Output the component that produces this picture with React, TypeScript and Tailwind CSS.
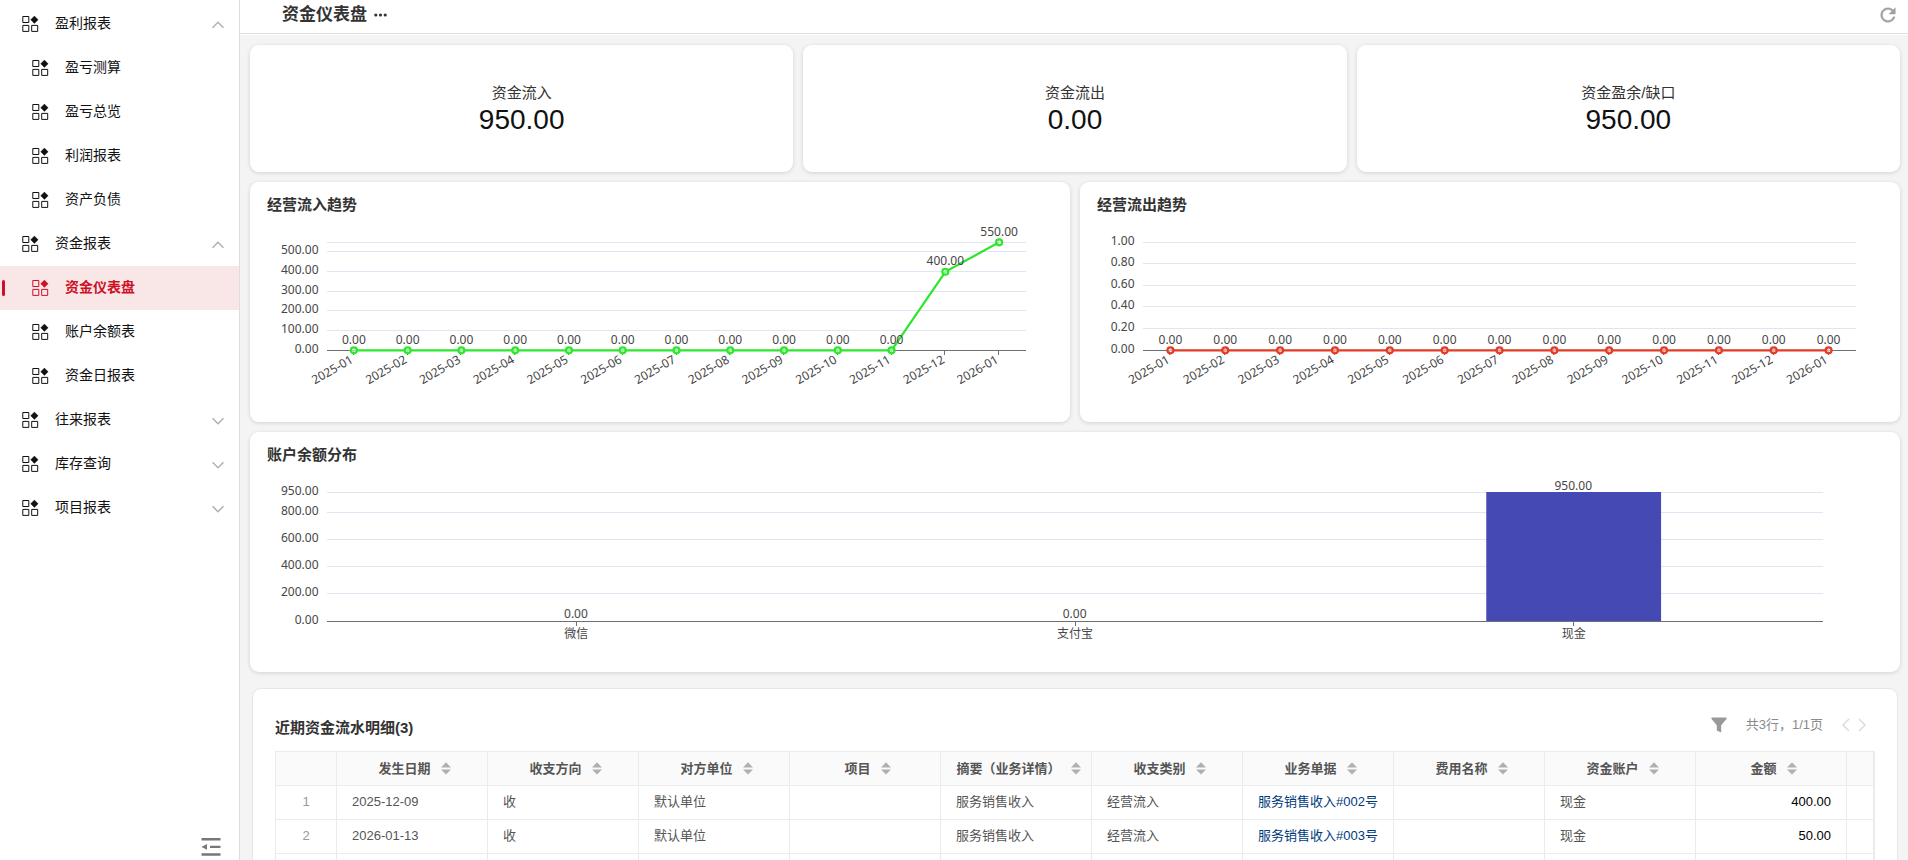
import React from "react";

const CARD = "rounded-[9px] bg-white shadow-[0_1px_4px_rgba(0,0,0,0.14)]";

function MenuIcon() {
  return (
    <svg width="17" height="16" viewBox="0 0 17 16" fill="none" stroke="currentColor" className="-mr-px shrink-0">
      <path d="M0.8 0.5h6v6h-6zM0.8 9.4h6v6h-6zM9.7 9.4h6v6h-6z" />
      <path d="M12.4 0L16.1 3.7L12.4 7.4L8.7 3.7Z" fill="currentColor" strokeWidth="0.4" />
    </svg>
  );
}

function RefreshIcon() {
  return (
    <svg width="22" height="22" viewBox="0 0 24 24" fill="#a0a0a0" stroke="#a0a0a0" strokeWidth="0.4">
      <path d="M17.65 6.35C16.2 4.9 14.21 4 12 4c-4.42 0-7.99 3.58-7.99 8s3.57 8 7.99 8c3.73 0 6.84-2.55 7.73-6h-2.08c-.82 2.33-3.04 4-5.65 4-3.31 0-6-2.69-6-6s2.69-6 6-6c1.66 0 3.14.69 4.22 1.78L13 11h7V4l-2.35 2.35z" />
    </svg>
  );
}

function MenuChevron({ up }: { up: boolean }) {
  return (
    <svg width="12" height="8" viewBox="0 0 12 8" fill="none" stroke="#b0b0b0" strokeWidth="1.5" className="mt-0.5 ml-auto shrink-0">
      <path d={up ? "M0.5 6.7L6 1.2L11.5 6.7" : "M0.5 1.2L6 6.7L11.5 1.2"} />
    </svg>
  );
}

type MenuEntry = { label: string; level: 1 | 2; open?: boolean; active?: boolean };

const menu: MenuEntry[] = [
  { label: "盈利报表", level: 1, open: true },
  { label: "盈亏测算", level: 2 },
  { label: "盈亏总览", level: 2 },
  { label: "利润报表", level: 2 },
  { label: "资产负债", level: 2 },
  { label: "资金报表", level: 1, open: true },
  { label: "资金仪表盘", level: 2, active: true },
  { label: "账户余额表", level: 2 },
  { label: "资金日报表", level: 2 },
  { label: "往来报表", level: 1, open: false },
  { label: "库存查询", level: 1, open: false },
  { label: "项目报表", level: 1, open: false },
];

function Sidebar() {
  return (
    <aside className="flex w-60 shrink-0 flex-col border-r border-[#dedede] bg-white pt-0.5">
      <nav className="flex-1">
        {menu.map((m) => (
          <div
            key={m.label}
            className={`relative flex h-11 items-center gap-[17px] pr-[15px] text-sm ${m.level === 1 ? "pl-[22px]" : "pl-8"} ${
              m.active ? "bg-[#f9e7e8] font-bold text-[#ce1126]" : "text-[#111]"
            }`}
          >
            {m.active && <span className="absolute left-0.5 top-[14px] h-4 w-[3px] rounded-sm bg-[#ce1126]" />}
            <MenuIcon />
            <span className="pb-0.5">{m.label}</span>
            {m.level === 1 && <MenuChevron up={!!m.open} />}
          </div>
        ))}
      </nav>
      <div className="flex justify-end pr-[18px] pb-1">
        <svg width="20" height="18" viewBox="0 0 20 18" fill="#777">
          <path d="M0.5 0h19v2.4h-19zM9 7.7h10.5v2.4H9zM0.5 15.3h19v2.4h-19zM0.5 8.9L6 6v5.8z" />
        </svg>
      </div>
    </aside>
  );
}

const AXIS_TEXT = "text-xs [font-family:'Noto_Sans','Noto_Sans_CJK_SC',sans-serif] fill-[#464646]";
const months = [
  "2025-01", "2025-02", "2025-03", "2025-04", "2025-05", "2025-06", "2025-07",
  "2025-08", "2025-09", "2025-10", "2025-11", "2025-12", "2026-01",
];

type GridProps = { left: number; right: number; top: number; bottom: number; max: number; ticks: number[]; hideLabel?: number };

function Grid({ left, right, top, bottom, max, ticks, hideLabel }: GridProps) {
  const y = (v: number) => Math.floor(bottom - (v / max) * (bottom - top)) + 0.5;
  return (
    <g>
      {ticks.map((t) => (
        <g key={t}>
          {t > 0 && <line x1={left} x2={right} y1={y(t)} y2={y(t)} stroke="#e0e6f1" />}
          {t !== hideLabel && (
            <text x={left - 8.5} y={y(t) + 2.5} textAnchor="end" className={AXIS_TEXT}>
              {t.toFixed(2)}
            </text>
          )}
        </g>
      ))}
      <line x1={left} x2={right} y1={bottom + 0.5} y2={bottom + 0.5} stroke="#6e7079" />
    </g>
  );
}

type TrendProps = { title: string; data: number[]; color: string; left: number; right: number; max: number; ticks: number[]; hideLabel?: number };

function TrendCard({ title, data, color, left, right, max, ticks, hideLabel }: TrendProps) {
  const top = 60;
  const bottom = 168;
  const step = (right - left) / data.length;
  const pts = data.map((v, i) => [left + step * (i + 0.5), bottom + 0.3 - (v / max) * (bottom - top)]);
  return (
    <section className={`${CARD} h-60 flex-1 overflow-hidden`}>
      <h2 className="h-0 pl-[17px] pt-3 text-[15px] leading-[22px] font-bold text-[#333]">{title}</h2>
      <svg width="820" height="240" viewBox="0 0 820 240" className="-mt-3 block">
        <Grid left={left} right={right} top={top} bottom={bottom} max={max} ticks={ticks} hideLabel={hideLabel} />
        {pts.map(([x], i) => (
          <g key={months[i]}>
            <line x1={Math.round(x) - 0.5} x2={Math.round(x) - 0.5} y1={bottom} y2={bottom + 5} stroke="#6e7079" />
            <text transform={`translate(${x} ${bottom + 12}) rotate(-30)`} textAnchor="end" className={AXIS_TEXT}>
              {months[i]}
            </text>
          </g>
        ))}
        <polyline points={pts.map((p) => p.join(",")).join(" ")} fill="none" stroke={color} strokeWidth="2.2" strokeLinejoin="bevel" />
        {pts.map(([x, y], i) => (
          <g key={months[i]}>
            <circle cx={x} cy={y} r="3" fill="#fff" fillOpacity="0.5" stroke={color} strokeWidth="2.2" />
            <text x={x} y={y - 6.5} textAnchor="middle" className={AXIS_TEXT}>
              {data[i].toFixed(2)}
            </text>
          </g>
        ))}
      </svg>
    </section>
  );
}

function BalanceCard() {
  const left = 77;
  const right = 1573;
  const bottom = 189;
  const top = 60;
  const step = (right - left) / 3;
  const accounts: [string, number][] = [["微信", 0], ["支付宝", 0], ["现金", 950]];
  return (
    <section className={`${CARD} h-60 shrink-0 overflow-hidden`}>
      <h2 className="h-0 pl-[17px] pt-3 text-[15px] leading-[22px] font-bold text-[#333]">账户余额分布</h2>
      <svg width="1650" height="240" viewBox="0 0 1650 240" className="-mt-3 block">
        <Grid left={left} right={right} top={top} bottom={bottom} max={950} ticks={[0, 200, 400, 600, 800, 950]} />
        {accounts.map(([name, value], i) => {
          const x = left + step * (i + 0.5);
          const h = (value / 950) * (bottom - top);
          return (
            <g key={name}>
              {value > 0 && (
                <rect x={x - 87.4} y={bottom - h} width="174.8" height={h} fill="#4549b4" />
              )}
              <line x1={Math.floor(x) + 0.5} x2={Math.floor(x) + 0.5} y1={bottom} y2={bottom + 5} stroke="#6e7079" />
              <text x={x - 0.4} y={value > 0 ? bottom - h - 2 : bottom - 2.6} textAnchor="middle" className={AXIS_TEXT}>
                {value.toFixed(2)}
              </text>
              <text x={x} y={bottom + 17} textAnchor="middle" className={AXIS_TEXT}>
                {name}
              </text>
            </g>
          );
        })}
      </svg>
    </section>
  );
}

const columns = ["发生日期", "收支方向", "对方单位", "项目", "摘要（业务详情）", "收支类别", "业务单据", "费用名称", "资金账户", "金额"];
const rows = [
  ["1", "2025-12-09", "收", "默认单位", "", "服务销售收入", "经营流入", "服务销售收入#002号", "", "现金", "400.00"],
  ["2", "2026-01-13", "收", "默认单位", "", "服务销售收入", "经营流入", "服务销售收入#003号", "", "现金", "50.00"],
  ["", "", "", "", "", "", "", "", "", "", ""],
];

const GRID_COLS = "grid grid-cols-[61px_repeat(10,151px)_27px]";
const CELL = "flex items-center border-r border-b border-[#ebebeb]";

function cellStyle(column: number) {
  if (column === 0) return "justify-center text-[#999]";
  if (column === 7) return "pl-[15px] text-[#003a7d]";
  if (column === 10) return "justify-end pr-[15px] text-black";
  return "pl-[15px]";
}

function DetailTable() {
  return (
    <section className="mx-0.5 mt-1.5 h-[300px] shrink-0 rounded-[9px] border border-[#e6e6e6] bg-white px-[22px] pt-6">
      <div className="flex h-[38px] items-start justify-between">
        <h2 className="pt-0.5 text-[15px] leading-[26px] font-bold text-[#333]">近期资金流水明细(3)</h2>
        <div className="flex h-[23px] items-center pr-2 text-[13px] text-[#8a8a8a]">
          <svg width="16" height="16" viewBox="0 0 16 16" fill="#999" className="mr-[19px]">
            <path d="M0.5 0.5h15v1.6L10.2 8.3V15.6L5.8 13.6V8.3L0.5 2.1z" />
          </svg>
          <span className="pt-px">共3行，1/1页</span>
          <svg width="26" height="14" viewBox="0 0 26 14" fill="none" stroke="#dcdcdc" strokeWidth="1.5" className="ml-[18px]">
            <path d="M8 1L2 7l6 6M18 1l6 6-6 6" />
          </svg>
        </div>
      </div>
      <div className="w-[1600px] border-t border-r border-l border-[#ebebeb] text-[13px] text-[#555]">
        <div className={`${GRID_COLS} h-[34px] bg-[#fafafa] font-bold`}>
          <div className={CELL} />
          {columns.map((c) => (
            <div key={c} className={`${CELL} justify-center gap-2.5 pl-[5px] whitespace-nowrap`}>
              <span>{c}</span>
              <svg width="10" height="13" viewBox="0 0 10 13" fill="#b0b0b0" className="shrink-0">
                <path d="M5 0.2L10 5.4H0zM5 12.6L0 7.4h10z" />
              </svg>
            </div>
          ))}
          <div className={CELL} />
        </div>
        {rows.map((r, i) => (
          <div key={i} className={`${GRID_COLS} h-[34px]`}>
            {r.map((v, j) => (
              <div key={j} className={`${CELL} pb-px whitespace-nowrap ${cellStyle(j)}`}>
                {v}
              </div>
            ))}
            <div className={CELL} />
          </div>
        ))}
      </div>
    </section>
  );
}

const kpis = [
  ["资金流入", "950.00"],
  ["资金流出", "0.00"],
  ["资金盈余/缺口", "950.00"],
];

export default function App() {
  return (
    <div className="flex h-[860px] w-[1908px] overflow-hidden bg-[#f4f4f4] [font-family:'Liberation_Sans','Noto_Sans_CJK_SC',sans-serif]">
      <Sidebar />
      <main className="flex min-w-0 flex-1 flex-col">
        <header className="flex h-[34px] shrink-0 items-center justify-between border-b border-[#dedede] bg-white pr-[9px] pb-[3px] pl-[42px]">
          <div className="flex items-center gap-[7px]">
            <h1 className="text-[17px] leading-6 font-bold text-[#333]">资金仪表盘</h1>
            <svg width="13" height="4" viewBox="0 0 13 4" fill="#333">
              <circle cx="1.8" cy="2" r="1.6" />
              <circle cx="6.5" cy="2" r="1.6" />
              <circle cx="11.2" cy="2" r="1.6" />
            </svg>
          </div>
          <RefreshIcon />
        </header>
        <div className="flex flex-col gap-2.5 border-t border-white pt-2.5 pr-2 pl-2.5">
          <div className="grid h-[127px] shrink-0 grid-cols-3 gap-2.5">
            {kpis.map(([label, value]) => (
              <section key={label} className={`${CARD} flex flex-col items-center pt-[37px]`}>
                <div className="text-[15px] leading-[22px] text-[#333]">{label}</div>
                <div className="text-[28px] leading-8 text-[#111]">{value}</div>
              </section>
            ))}
          </div>
          <div className="flex shrink-0 gap-2.5">
            <TrendCard
              title="经营流入趋势"
              data={[0, 0, 0, 0, 0, 0, 0, 0, 0, 0, 0, 400, 550]}
              color="#2ee62e"
              left={77}
              right={776}
              max={550}
              ticks={[0, 100, 200, 300, 400, 500, 550]}
              hideLabel={550}
            />
            <TrendCard
              title="经营流出趋势"
              data={[0, 0, 0, 0, 0, 0, 0, 0, 0, 0, 0, 0, 0]}
              color="#e23b26"
              left={63}
              right={776}
              max={1}
              ticks={[0, 0.2, 0.4, 0.6, 0.8, 1]}
            />
          </div>
          <BalanceCard />
          <DetailTable />
        </div>
      </main>
    </div>
  );
}
